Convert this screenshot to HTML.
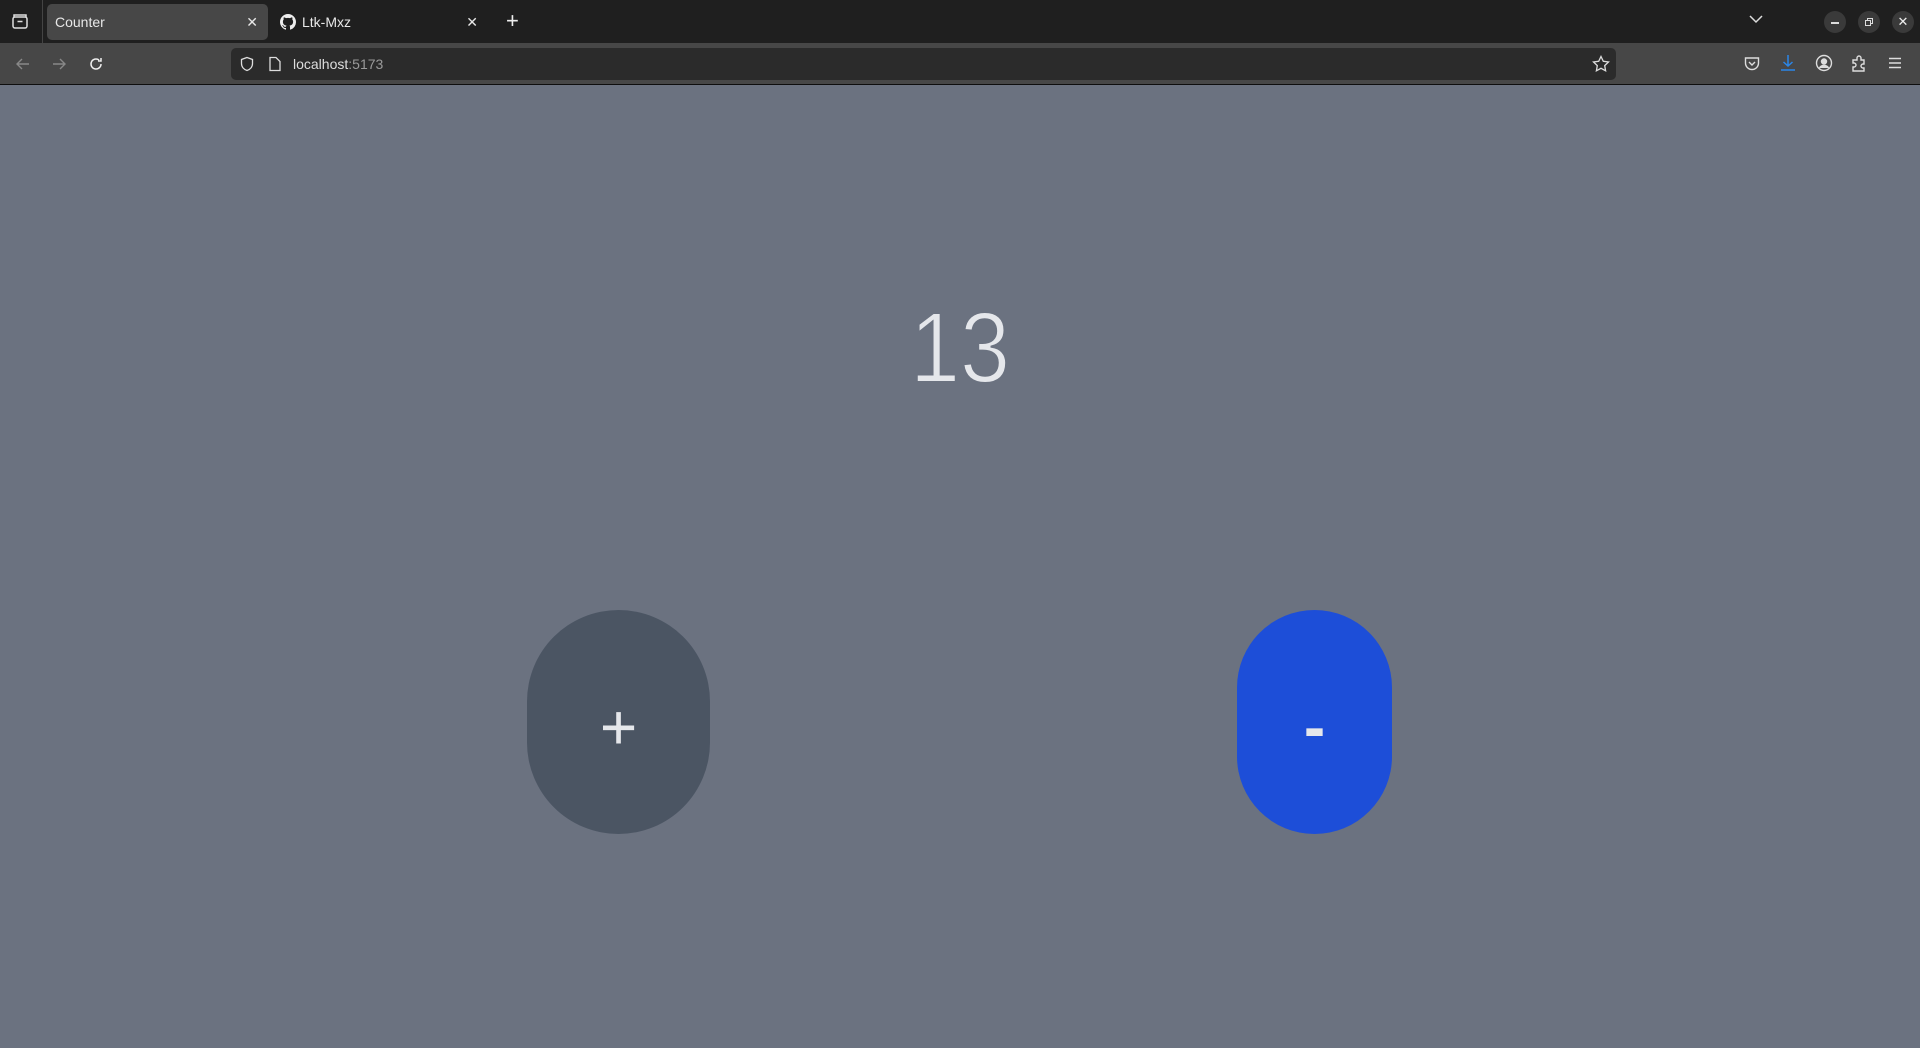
<!DOCTYPE html>
<html><head><meta charset="utf-8"><style>
*{margin:0;padding:0;box-sizing:border-box}
body{width:1920px;height:1048px;overflow:hidden;background:#6b7280;font-family:"Liberation Sans",sans-serif;position:relative}
.tabs{position:absolute;left:0;top:0;width:1920px;height:43px;background:#1f1f1f}
.tool{position:absolute;left:0;top:43px;width:1920px;height:42px;background:#474747;border-bottom:1px solid #0e0e0e}
.tab{position:absolute;top:4px;height:36px;border-radius:5px;color:#e8e8e8;font-size:14px;line-height:36px}
.url{position:absolute;left:231px;top:5px;width:1385px;height:32px;background:#2b2b2b;border-radius:5px;color:#ddd;font-size:14px;line-height:32px}
.abs{position:absolute}
.btn{position:absolute;top:610px;height:224px;border-radius:9999px;color:#e5e7eb;font-size:64px;text-align:center;line-height:234px}
</style></head><body>
<div class="tabs">
 <svg class="abs" style="left:11px;top:13px" width="18" height="18" viewBox="0 0 18 18" fill="none" stroke="#ddd" stroke-width="1.5"><rect x="2" y="4" width="14" height="11" rx="2"/><path d="M3 4V2h12v2M6.5 8.5h5"/></svg>
 <div class="abs" style="left:42px;top:0;width:1px;height:43px;background:#444"></div>
 <div class="tab" style="left:47px;width:221px;background:#474747;padding-left:8px">Counter<span style="position:absolute;right:10px;font-size:14px">✕</span></div>
 <div class="tab" style="left:278px;width:210px;padding-left:24px">
  <svg class="abs" style="left:2px;top:10px" width="16" height="16" viewBox="0 0 16 16"><path fill="#eee" d="M8 0C3.58 0 0 3.58 0 8c0 3.54 2.29 6.530 5.47 7.59.4.07.55-.17.55-.38v-1.33c-2.23.48-2.7-1.07-2.7-1.070-.36-.92-.89-1.170-.89-1.17-.73-.5.05-.49.05-.49.8.06 1.23.83 1.23.83.71 1.22 1.87.87 2.33.66.07-.52.28-.87.51-1.07-1.78-.2-3.64-.89-3.64-3.95 0-.87.31-1.59.82-2.15-.08-.2-.36-1.02.08-2.12 0 0 .67-.21 2.2.82a7.6 7.6 0 0 1 4 0c1.53-1.04 2.2-.82 2.2-.82.44 1.1.16 1.92.08 2.12.51.56.82 1.27.82 2.15 0 3.07-1.87 3.75-3.65 3.95.29.25.54.73.54 1.48v2.2c0 .21.15.46.55.38A8.01 8.01 0 0 0 16 8c0-4.42-3.58-8-8-8z"/></svg>
  Ltk-Mxz<span style="position:absolute;right:10px">✕</span></div>
 <div class="abs" style="left:506px;top:8px;color:#eee;font-size:22px">+</div>
 <svg class="abs" style="left:1749px;top:14px" width="14" height="10" viewBox="0 0 14 10" fill="none" stroke="#ddd" stroke-width="1.5"><path d="M1 2l6 6 6-6"/></svg>
 <div class="abs" style="left:1824px;top:11px;width:22px;height:22px;border-radius:50%;background:#3a3a3a"></div>
 <div class="abs" style="left:1831px;top:22px;width:8px;height:1.5px;background:#ddd"></div>
 <div class="abs" style="left:1858px;top:11px;width:22px;height:22px;border-radius:50%;background:#3a3a3a"></div>
 <svg class="abs" style="left:1864px;top:17px" width="10" height="10" viewBox="0 0 10 10" fill="none" stroke="#ddd"><rect x="1.5" y="3.5" width="5" height="5"/><path d="M3.5 3.5v-2h5v5h-2"/></svg>
 <div class="abs" style="left:1892px;top:11px;width:22px;height:22px;border-radius:50%;background:#3a3a3a;color:#eee;font-size:13px;text-align:center;line-height:22px">✕</div>
</div>
<div class="tool">
 <svg class="abs" style="left:15px;top:13px" width="16" height="16" viewBox="0 0 16 16" fill="none" stroke="#888" stroke-width="1.4"><path d="M14 8H2M7 3L2 8l5 5"/></svg>
 <svg class="abs" style="left:51px;top:13px" width="16" height="16" viewBox="0 0 16 16" fill="none" stroke="#888" stroke-width="1.4"><path d="M2 8h12M9 3l5 5-5 5"/></svg>
 <svg class="abs" style="left:88px;top:13px" width="16" height="16" viewBox="0 0 16 16" fill="none" stroke="#eee" stroke-width="1.5"><path d="M13 8A5 5 0 1 1 11 4M13 2v3h-3"/></svg>
 <div class="url">
  <svg class="abs" style="left:8px;top:8px" width="16" height="16" viewBox="0 0 16 16" fill="none" stroke="#ddd" stroke-width="1.3"><path d="M8 1.5l5.5 2v4c0 3.5-2.5 6-5.5 7-3-1-5.5-3.5-5.5-7v-4z"/></svg>
  <svg class="abs" style="left:37px;top:8px" width="14" height="16" viewBox="0 0 14 16" fill="none" stroke="#ddd" stroke-width="1.3"><path d="M2 1.5h6l4 4v9H2z"/></svg>
  <span class="abs" style="left:62px">localhost<span style="color:#9a9a9a">:5173</span></span>
  <svg class="abs" style="left:1361px;top:7px" width="18" height="18" viewBox="0 0 18 18" fill="none" stroke="#ddd" stroke-width="1.3"><path d="M9 1.5l2.3 4.8 5.2.7-3.8 3.6.9 5.2L9 13.3l-4.6 2.5.9-5.2L1.5 7l5.2-.7z"/></svg>
 </div>
 <svg class="abs" style="left:1743px;top:12px" width="18" height="18" viewBox="0 0 18 18" fill="none" stroke="#ddd" stroke-width="1.4"><path d="M2.5 3h13v5a6.5 6.5 0 0 1-13 0z"/><path d="M6 7l3 3 3-3"/></svg>
 <svg class="abs" style="left:1779px;top:11px" width="18" height="18" viewBox="0 0 18 18" fill="none" stroke="#2a86e8" stroke-width="1.5"><path d="M9 1v11M4.5 8L9 12l4.5-4M2 16h14"/></svg>
 <svg class="abs" style="left:1815px;top:11px" width="18" height="18" viewBox="0 0 18 18" fill="none" stroke="#ddd" stroke-width="1.4"><circle cx="9" cy="9" r="7.5"/><circle cx="9" cy="7.5" r="2.5" fill="#ddd"/><path d="M4.5 14c1-2 2.5-2.5 4.5-2.5s3.5.5 4.5 2.5" fill="#ddd"/></svg>
 <svg class="abs" style="left:1851px;top:11px" width="18" height="18" viewBox="0 0 18 18" fill="none" stroke="#ddd" stroke-width="1.4"><path d="M2 6h4V4a2 2 0 0 1 4 0v2h3v4h-1a2 2 0 0 0 0 4h1v3H2v-4h1a2 2 0 0 0 0-4H2z"/></svg>
 <svg class="abs" style="left:1887px;top:12px" width="16" height="16" viewBox="0 0 16 16" fill="none" stroke="#ddd" stroke-width="1.4"><path d="M2 3.5h12M2 8h12M2 12.5h12"/></svg>
</div>
<div class="abs" style="left:0;top:296px;width:1920px;text-align:center;color:#e5e7eb;font-size:100px;line-height:104px;transform:scaleX(0.9);-webkit-text-stroke:2px #6b7280">13</div>
<div class="btn" style="left:527px;width:183px;background:#4b5563">+</div>
<div class="btn" style="left:1237px;width:155px;background:#1d4ed8;font-weight:bold">-</div>
</body></html>
